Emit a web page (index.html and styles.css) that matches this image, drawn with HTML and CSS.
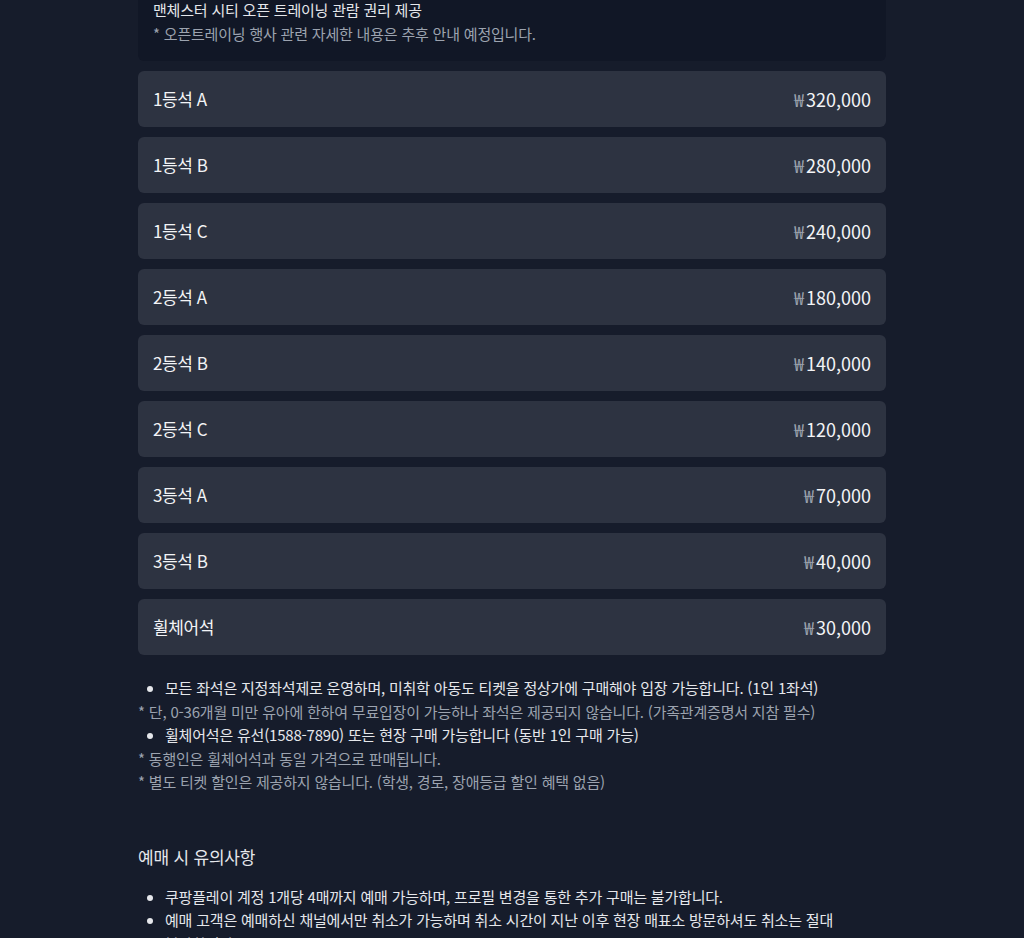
FILE: index.html
```html
<!DOCTYPE html>
<html lang="ko">
<head>
    <meta charset="UTF-8">
    <title>좌석 및 가격 안내</title>
    <link rel="stylesheet" href="styles.css">
</head>
<body>
    <div class="page">
        <div class="benefit">
            <p class="benefit-main">맨체스터 시티 오픈 트레이닝 관람 권리 제공</p>
            <p class="benefit-note">* 오픈트레이닝 행사 관련 자세한 내용은 추후 안내 예정입니다.</p>
        </div>

        <ul class="seat-list">
            <li class="seat"><span class="seat-name">1등석 A</span><span class="seat-price"><span class="won">₩</span>320,000</span></li>
            <li class="seat"><span class="seat-name">1등석 B</span><span class="seat-price"><span class="won">₩</span>280,000</span></li>
            <li class="seat"><span class="seat-name">1등석 C</span><span class="seat-price"><span class="won">₩</span>240,000</span></li>
            <li class="seat"><span class="seat-name">2등석 A</span><span class="seat-price"><span class="won">₩</span>180,000</span></li>
            <li class="seat"><span class="seat-name">2등석 B</span><span class="seat-price"><span class="won">₩</span>140,000</span></li>
            <li class="seat"><span class="seat-name">2등석 C</span><span class="seat-price"><span class="won">₩</span>120,000</span></li>
            <li class="seat"><span class="seat-name">3등석 A</span><span class="seat-price"><span class="won">₩</span>70,000</span></li>
            <li class="seat"><span class="seat-name">3등석 B</span><span class="seat-price"><span class="won">₩</span>40,000</span></li>
            <li class="seat"><span class="seat-name">휠체어석</span><span class="seat-price"><span class="won">₩</span>30,000</span></li>
        </ul>

        <div class="notice">
            <ul class="bullets">
                <li>모든 좌석은 지정좌석제로 운영하며, 미취학 아동도 티켓을 정상가에 구매해야 입장 가능합니다. (1인 1좌석)</li>
            </ul>
            <p class="note">* 단, 0-36개월 미만 유아에 한하여 무료입장이 가능하나 좌석은 제공되지 않습니다. (가족관계증명서 지참 필수)</p>
            <ul class="bullets">
                <li>휠체어석은 유선(1588-7890) 또는 현장 구매 가능합니다 (동반 1인 구매 가능)</li>
            </ul>
            <p class="note">* 동행인은 휠체어석과 동일 가격으로 판매됩니다.</p>
            <p class="note">* 별도 티켓 할인은 제공하지 않습니다. (학생, 경로, 장애등급 할인 혜택 없음)</p>
        </div>

        <h2 class="section-title">예매 시 유의사항</h2>
        <ul class="bullets">
            <li>쿠팡플레이 계정 1개당 4매까지 예매 가능하며, 프로필 변경을 통한 추가 구매는 불가합니다.</li>
            <li>예매 고객은 예매하신 채널에서만 취소가 가능하며 취소 시간이 지난 이후 현장 매표소 방문하셔도 취소는 절대 불가합니다.</li>
        </ul>
    </div>
</body>
</html>
```

FILE: styles.css
```css
body {
    margin: 0;
    background-color: #161c2b;
    color: #e5e7eb;
    font-family: "Noto Sans CJK KR", "Noto Sans", sans-serif;
    font-size: 15px;
    letter-spacing: -0.2px;
    line-height: 24px;
    word-break: keep-all;
}
.page {
    width: 748px;
    margin: -17px auto 0;
}
p {
    margin: 0;
}
.benefit {
    background-color: #111726;
    border-radius: 6px;
    padding: 15px 15px 15px;
}
.benefit-main {
    color: #e5e7eb;
}
.benefit-note {
    color: #9ca3af;
}
.seat-list {
    list-style: none;
    margin: 10px 0 0;
    padding: 0;
    display: flex;
    flex-direction: column;
    gap: 10px;
}
.seat {
    background-color: #2d3341;
    border-radius: 6px;
    height: 56px;
    padding: 0 15px;
    display: flex;
    align-items: center;
    justify-content: space-between;
    color: #f3f4f6;
}
.seat-name {
    font-size: 17px;
    letter-spacing: -0.4px;
}
.seat-price {
    font-size: 18px;
    letter-spacing: 0;
}
.won {
    color: #9ca3af;
    margin-right: 2px;
}
.notice {
    margin-top: 21px;
}
.bullets {
    margin: 0;
    padding-left: 27px;
    color: #e5e7eb;
}
.bullets li {
    line-height: 23.5px;
}
.note {
    color: #9ca3af;
    line-height: 23.5px;
}
.section-title {
    margin: 50px 0 15px;
    font-size: 17px;
    font-weight: normal;
    line-height: 26px;
    color: #e5e7eb;
}
```
